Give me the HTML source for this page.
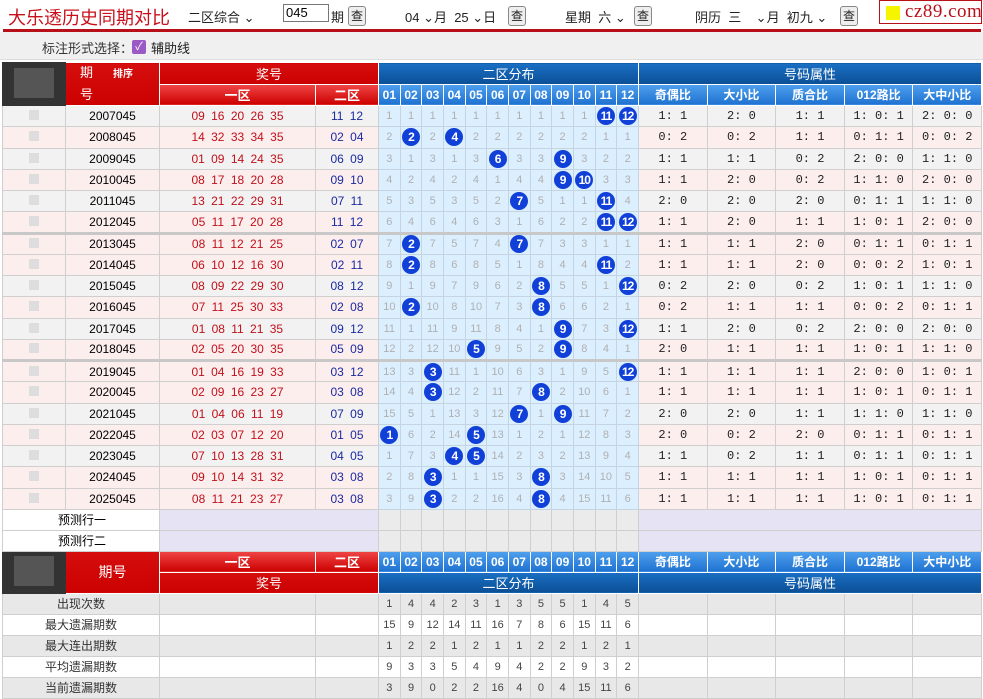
<!DOCTYPE html>
<html><head><meta charset="utf-8">
<style>
*{box-sizing:border-box;margin:0;padding:0}
body{width:983px;height:699px;overflow:hidden;background:#fff;font-family:"Liberation Sans","Noto Sans CJK SC",sans-serif;font-size:12px;color:#000;position:relative}
#top{position:absolute;left:0;top:0;width:983px;height:30px}
#top .t{position:absolute;left:8px;top:4px;font-size:18px;color:#c8101a}
#top span.c{position:absolute;top:7px;font-size:13px;color:#222}
.btn{position:absolute;top:6px;width:18px;height:20px;border:1px solid #888;border-radius:3px;background:#eee;font-size:12px;text-align:center;line-height:18px;color:#222}
#redline{position:absolute;left:3px;top:29px;width:978px;height:3px;background:#b81019}
#opt{position:absolute;left:0;top:32px;width:983px;height:28px;background:#f0f0f0;border-bottom:1px solid #ddd}
#opt .l{position:absolute;left:42px;top:6px;font-size:13px;color:#333}
#opt .cb{position:absolute;left:132px;top:8px;width:14px;height:14px;background:#9b59c6;border-radius:2px;color:#fff;font-size:11px;line-height:14px;text-align:center}
#opt .l2{position:absolute;left:151px;top:6px;font-size:13px;color:#222}
#logo{position:absolute;left:879px;top:0px;width:103px;height:24px;border:1px solid #b81019;background:#fff;font-family:"Liberation Serif",serif;font-size:19px;color:#b81019;line-height:22px;padding-left:25px;letter-spacing:0.5px}
#logo i{position:absolute;left:6px;top:5px;width:14px;height:14px;background:#f5f500}
table{position:absolute;left:2px;border-collapse:collapse;table-layout:fixed;width:979px}
td{border:1px solid #cfcfcf;text-align:center;height:21px;padding:0;white-space:nowrap;overflow:hidden}
tr.hd td{height:20.5px}
tr.dr td{height:21.25px}
.rh{background:linear-gradient(#d50e0e,#c00);color:#fff;font-size:13px;border-color:#fff}
.rh2{background:linear-gradient(#f04646,#c00);color:#fff;font-size:13px;border-color:#fff;font-weight:bold}
.bh{background:linear-gradient(#1a6fc4,#0b4f96);color:#fff;font-size:13px;border-color:#fff}
.bh2{background:linear-gradient(#4fa0ee,#1f72d0);color:#fff;font-size:12px;border-color:#fff;font-weight:bold}
.dk{background:#333;border-color:#333}
.g{background:#f2f2f2}.p{background:#fdeeee}
.n1{color:#c0101a;font-size:12px;word-spacing:3px}
.n2{color:#1a2aa0;font-size:12px;word-spacing:3px}
.d{background:#dcefff;color:#b0b0b0;font-size:11px;border-color:#c4d4e2}
.at{font-family:"Liberation Mono",monospace;font-size:12px;color:#222}
.sep td{border-top:3px solid #c8c8c8}
.ball{display:inline-block;width:18px;height:18px;border-radius:50%;background:#1040d8;color:#fff;font-weight:bold;font-size:12px;line-height:18px;vertical-align:middle;letter-spacing:-1px}
.blur{display:inline-block;width:10px;height:10px;background:#ddd}
.pv{background:#e6e4f4}.pg{background:#ebebeb}
.st td{font-size:12px;color:#333}
.st td.dd{font-size:11px;color:#444}
</style></head><body>
<div id="top">
<div class="t">大乐透历史同期对比</div>
<span class="c" style="left:188px">二区综合 ⌄</span>
<div style="position:absolute;left:283px;top:4px;width:46px;height:18px;border:1px solid #777;font-size:13px;padding-left:2px;line-height:16px">045</div>
<span class="c" style="left:331px">期</span><div class="btn" style="left:348px">查</div>
<span class="c" style="left:405px">04 ⌄月&nbsp; 25 ⌄日</span><div class="btn" style="left:508px">查</div>
<span class="c" style="left:565px">星期&nbsp; 六 ⌄</span><div class="btn" style="left:634px">查</div>
<span class="c" style="left:695px">阴历&nbsp; 三&nbsp;&nbsp;&nbsp; ⌄月&nbsp; 初九 ⌄</span><div class="btn" style="left:840px">查</div>
</div>
<div id="logo"><i></i>cz89.com</div>
<div id="redline"></div>
<div id="opt"><span class="l">标注形式选择：</span><span class="cb">✓</span><span class="l2">辅助线</span></div>
<table id="tb" style="top:62px"></table>
<script>
var D=[["2007045","09 16 20 26 35","11 12","1:1 2:0 1:1 1:0:1 2:0:0","g"],
["2008045","14 32 33 34 35","02 04","0:2 0:2 1:1 0:1:1 0:0:2","p"],
["2009045","01 09 14 24 35","06 09","1:1 1:1 0:2 2:0:0 1:1:0","g"],
["2010045","08 17 18 20 28","09 10","1:1 2:0 0:2 1:1:0 2:0:0","p"],
["2011045","13 21 22 29 31","07 11","2:0 2:0 2:0 0:1:1 1:1:0","g"],
["2012045","05 11 17 20 28","11 12","1:1 2:0 1:1 1:0:1 2:0:0","p"],
["2013045","08 11 12 21 25","02 07","1:1 1:1 2:0 0:1:1 0:1:1","p"],
["2014045","06 10 12 16 30","02 11","1:1 1:1 2:0 0:0:2 1:0:1","p"],
["2015045","08 09 22 29 30","08 12","0:2 2:0 0:2 1:0:1 1:1:0","g"],
["2016045","07 11 25 30 33","02 08","0:2 1:1 1:1 0:0:2 0:1:1","p"],
["2017045","01 08 11 21 35","09 12","1:1 2:0 0:2 2:0:0 2:0:0","g"],
["2018045","02 05 20 30 35","05 09","2:0 1:1 1:1 1:0:1 1:1:0","p"],
["2019045","01 04 16 19 33","03 12","1:1 1:1 1:1 2:0:0 1:0:1","p"],
["2020045","02 09 16 23 27","03 08","1:1 1:1 1:1 1:0:1 0:1:1","p"],
["2021045","01 04 06 11 19","07 09","2:0 2:0 1:1 1:1:0 1:1:0","g"],
["2022045","02 03 07 12 20","01 05","2:0 0:2 2:0 0:1:1 0:1:1","p"],
["2023045","07 10 13 28 31","04 05","1:1 0:2 1:1 0:1:1 0:1:1","g"],
["2024045","09 10 14 31 32","03 08","1:1 1:1 1:1 1:0:1 0:1:1","p"],
["2025045","08 11 21 23 27","03 08","1:1 1:1 1:1 1:0:1 0:1:1","p"]];
var W=[63,94,156,63];for(var i=0;i<12;i++)W.push(21.67);for(i=0;i<5;i++)W.push(68.6);
var h='<colgroup>'+W.map(function(w){return '<col style="width:'+w+'px">'}).join('')+'</colgroup>';
var nums='';for(i=1;i<=12;i++)nums+='<td class="bh2">'+(i<10?'0':'')+i+'</td>';
var attrs=['奇偶比','大小比','质合比','012路比','大中小比'].map(function(a){return '<td class="bh2">'+a+'</td>'}).join('');
h+='<tr class="hd"><td class="dk" rowspan="2"><span style="display:inline-block;width:40px;height:30px;background:#555"></span></td><td class="rh" rowspan="2" style="text-align:left;padding-left:14px;line-height:20px">期<span style="font-size:10px;font-weight:bold;margin-left:20px">排序</span><br>号</td><td class="rh" colspan="2">奖号</td><td class="bh" colspan="12">二区分布</td><td class="bh" colspan="5">号码属性</td></tr>';
h+='<tr class="hd"><td class="rh2">一区</td><td class="rh2">二区</td>'+nums+attrs+'</tr>';
var miss=[0,0,0,0,0,0,0,0,0,0,0,0];
D.forEach(function(r,k){
 var hits=r[2].split(' ').map(Number);
 var cls=(k==6||k==12)?'dr sep':'dr';
 var s='<tr class="'+cls+'"><td class="'+r[4]+'"><span class="blur"></span></td><td class="'+r[4]+'">'+r[0]+'</td><td class="'+r[4]+' n1">'+r[1]+'</td><td class="'+r[4]+' n2">'+r[2]+'</td>';
 for(var j=1;j<=12;j++){
  if(hits.indexOf(j)>=0){miss[j-1]=0;s+='<td class="d"><span class="ball">'+j+'</span></td>';}
  else{miss[j-1]++;s+='<td class="d">'+miss[j-1]+'</td>';}
 }
 r[3].split(' ').forEach(function(a){s+='<td class="'+r[4]+' at">'+a.split(':').join(': ')+'</td>'});
 h+=s+'</tr>';
});
var e12='';for(i=0;i<12;i++)e12+='<td class="pg"></td>';
h+='<tr><td colspan="2" style="background:#fff;text-align:left;padding-left:55px;font-size:12px">预测行一</td><td class="pv" colspan="2"></td>'+e12+'<td class="pv" colspan="5"></td></tr>';
h+='<tr><td colspan="2" style="background:#fff;text-align:left;padding-left:55px;font-size:12px">预测行二<span style="color:#c33;margin-left:60px;font-size:10px">▼</span></td><td class="pv" colspan="2"></td>'+e12+'<td class="pv" colspan="5"></td></tr>';
h+='<tr><td class="dk" rowspan="2"><span style="display:inline-block;width:40px;height:30px;background:#555"></span></td><td class="rh" rowspan="2" style="font-size:14px">期号</td><td class="rh2">一区</td><td class="rh2">二区</td>'+nums+attrs+'</tr>';
h+='<tr><td class="rh" colspan="2">奖号</td><td class="bh" colspan="12">二区分布</td><td class="bh" colspan="5">号码属性</td></tr>';
var S=[["出现次数","1 4 4 2 3 1 3 5 5 1 4 5"],["最大遗漏期数","15 9 12 14 11 16 7 8 6 15 11 6"],["最大连出期数","1 2 2 1 2 1 1 2 2 1 2 1"],["平均遗漏期数","9 3 3 5 4 9 4 2 2 9 3 2"],["当前遗漏期数","3 9 0 2 2 16 4 0 4 15 11 6"]];
S.forEach(function(r,k){
 var bg=k%2?'#fff':'#e8e8e8';
 var s='<tr class="st" style="background:'+bg+'"><td colspan="2">'+r[0]+'</td><td></td><td></td>';
 r[1].split(' ').forEach(function(v){s+='<td class="dd">'+v+'</td>'});
 for(var j=0;j<5;j++)s+='<td></td>';
 h+=s+'</tr>';
});
document.getElementById('tb').innerHTML=h;
</script>
</body></html>
